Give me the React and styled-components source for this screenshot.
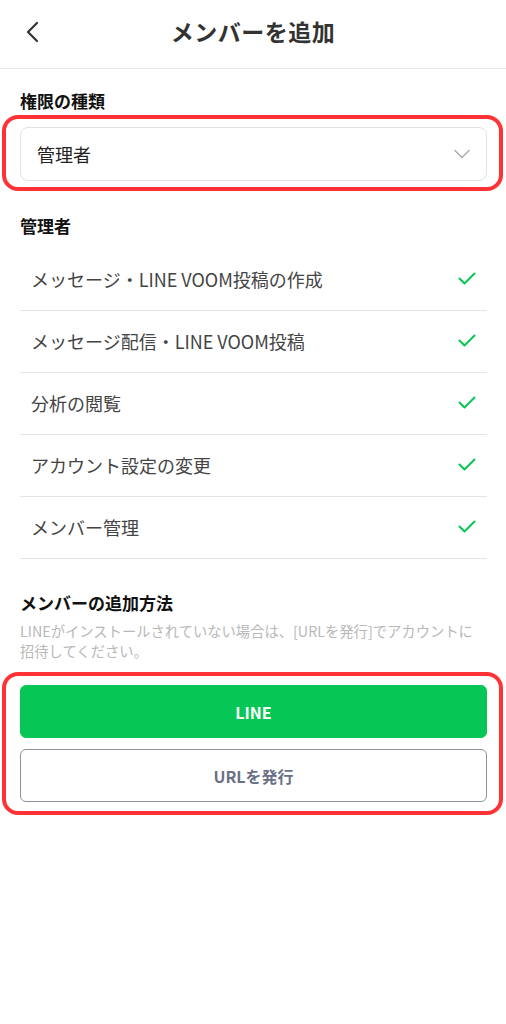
import React from "react";
import styled, { createGlobalStyle } from "styled-components";

const Global = createGlobalStyle`
  html, body { margin: 0; padding: 0; background: #fff; }
  body { font-family: "Noto Sans CJK JP", "Noto Sans", sans-serif; -webkit-font-smoothing: antialiased; }
  * { box-sizing: border-box; }
`;

const Page = styled.div`
  width: 506px;
  min-height: 1024px;
  background: #fff;
`;

const Header = styled.header`
  height: 69px;
  border-bottom: 1px solid #e6e6e6;
  display: grid;
  grid-template-columns: 60px 1fr 60px;
  align-items: center;
`;

const BackButton = styled.button`
  border: 0;
  background: none;
  padding: 0 0 4px 24px;
  height: 100%;
  display: flex;
  align-items: center;
  cursor: pointer;
`;

const Title = styled.h1`
  margin: 0;
  text-align: center;
  font-size: 23px;
  font-weight: 700;
  color: #333;
  letter-spacing: 0.5px;
  line-height: 1;
  padding-bottom: 6px;
`;

const Content = styled.main`
  padding: 0 19px 0 20px;
`;

const Label = styled.h2`
  margin: ${(p) => p.$mt}px 0 0;
  font-size: 17px;
  line-height: 24px;
  font-weight: 700;
  color: #111;
`;

const Highlight = styled.div`
  margin: ${(p) => p.$mt}px -16px 0 -18px;
  border: 4px solid #ff3336;
  border-radius: 16px;
  padding: ${(p) => p.$pad};
  display: flex;
  flex-direction: column;
  gap: 11px;
`;

const Select = styled.div`
  height: 54px;
  border: 1px solid #e2e2e2;
  border-radius: 8px;
  display: flex;
  align-items: center;
  justify-content: space-between;
  padding: 0 16px 0 16px;
  font-size: 18px;
  color: #222;
`;

const List = styled.ul`
  list-style: none;
  margin: 11px 0 0;
  padding: 0;
`;

const Row = styled.li`
  height: 62px;
  border-bottom: 1px solid #e4e4e4;
  display: flex;
  align-items: center;
  justify-content: space-between;
  padding: 0 11px 2px 11px;
  font-size: 18px;
  color: #444;
`;

const Description = styled.p`
  margin: 6px 0 0;
  max-width: 470px;
  font-size: 14.3px;
  line-height: 20px;
  color: #b8b8b8;
`;

const Button = styled.button`
  height: 53px;
  flex: none;
  width: 100%;
  border-radius: 6px;
  font-family: inherit;
  font-size: 16px;
  font-weight: 700;
  cursor: pointer;
  border: 1px solid ${(p) => (p.$primary ? "#06c755" : "#8e919e")};
  background: ${(p) => (p.$primary ? "#06c755" : "#fff")};
  color: ${(p) => (p.$primary ? "#fff" : "#6a6f86")};
`;

const Chevron = () => (
  <svg width="16" height="22" viewBox="0 0 16 22" fill="none">
    <path d="M13 2 L4 11 L13 20" stroke="#333" strokeWidth="2.2" strokeLinecap="round" strokeLinejoin="round" />
  </svg>
);

const Down = () => (
  <svg width="16" height="10" viewBox="0 0 16 10" fill="none">
    <path d="M1 1.5 L8 8.5 L15 1.5" stroke="#a9a9a9" strokeWidth="1.4" strokeLinecap="round" strokeLinejoin="round" />
  </svg>
);

const Check = () => (
  <svg width="18" height="14" viewBox="0 0 18 14" fill="none">
    <path d="M1.5 6.5 L6.5 11.5 L16.5 1.5" stroke="#06c755" strokeWidth="2" strokeLinecap="round" strokeLinejoin="round" />
  </svg>
);

const perms = [
  "メッセージ・LINE VOOM投稿の作成",
  "メッセージ配信・LINE VOOM投稿",
  "分析の閲覧",
  "アカウント設定の変更",
  "メンバー管理",
];

export default function App() {
  return (
    <Page>
      <Global />
      <Header>
        <BackButton aria-label="戻る">
          <Chevron />
        </BackButton>
        <Title>メンバーを追加</Title>
        <span />
      </Header>
      <Content>
        <Label $mt={20}>権限の種類</Label>
        <Highlight $mt={2} $pad="8px 12px 6px 14px">
          <Select>
            <span>管理者</span>
            <Down />
          </Select>
        </Highlight>
        <Label $mt={23}>管理者</Label>
        <List>
          {perms.map((p) => (
            <Row key={p}>
              <span>{p}</span>
              <Check />
            </Row>
          ))}
        </List>
        <Label $mt={32}>メンバーの追加方法</Label>
        <Description>
          LINEがインストールされていない場合は、[URLを発行]でアカウントに招待してください。
        </Description>
        <Highlight $mt={11} $pad="9px 12px 9px 14px">
          <Button $primary>LINE</Button>
          <Button>URLを発行</Button>
        </Highlight>
      </Content>
    </Page>
  );
}
